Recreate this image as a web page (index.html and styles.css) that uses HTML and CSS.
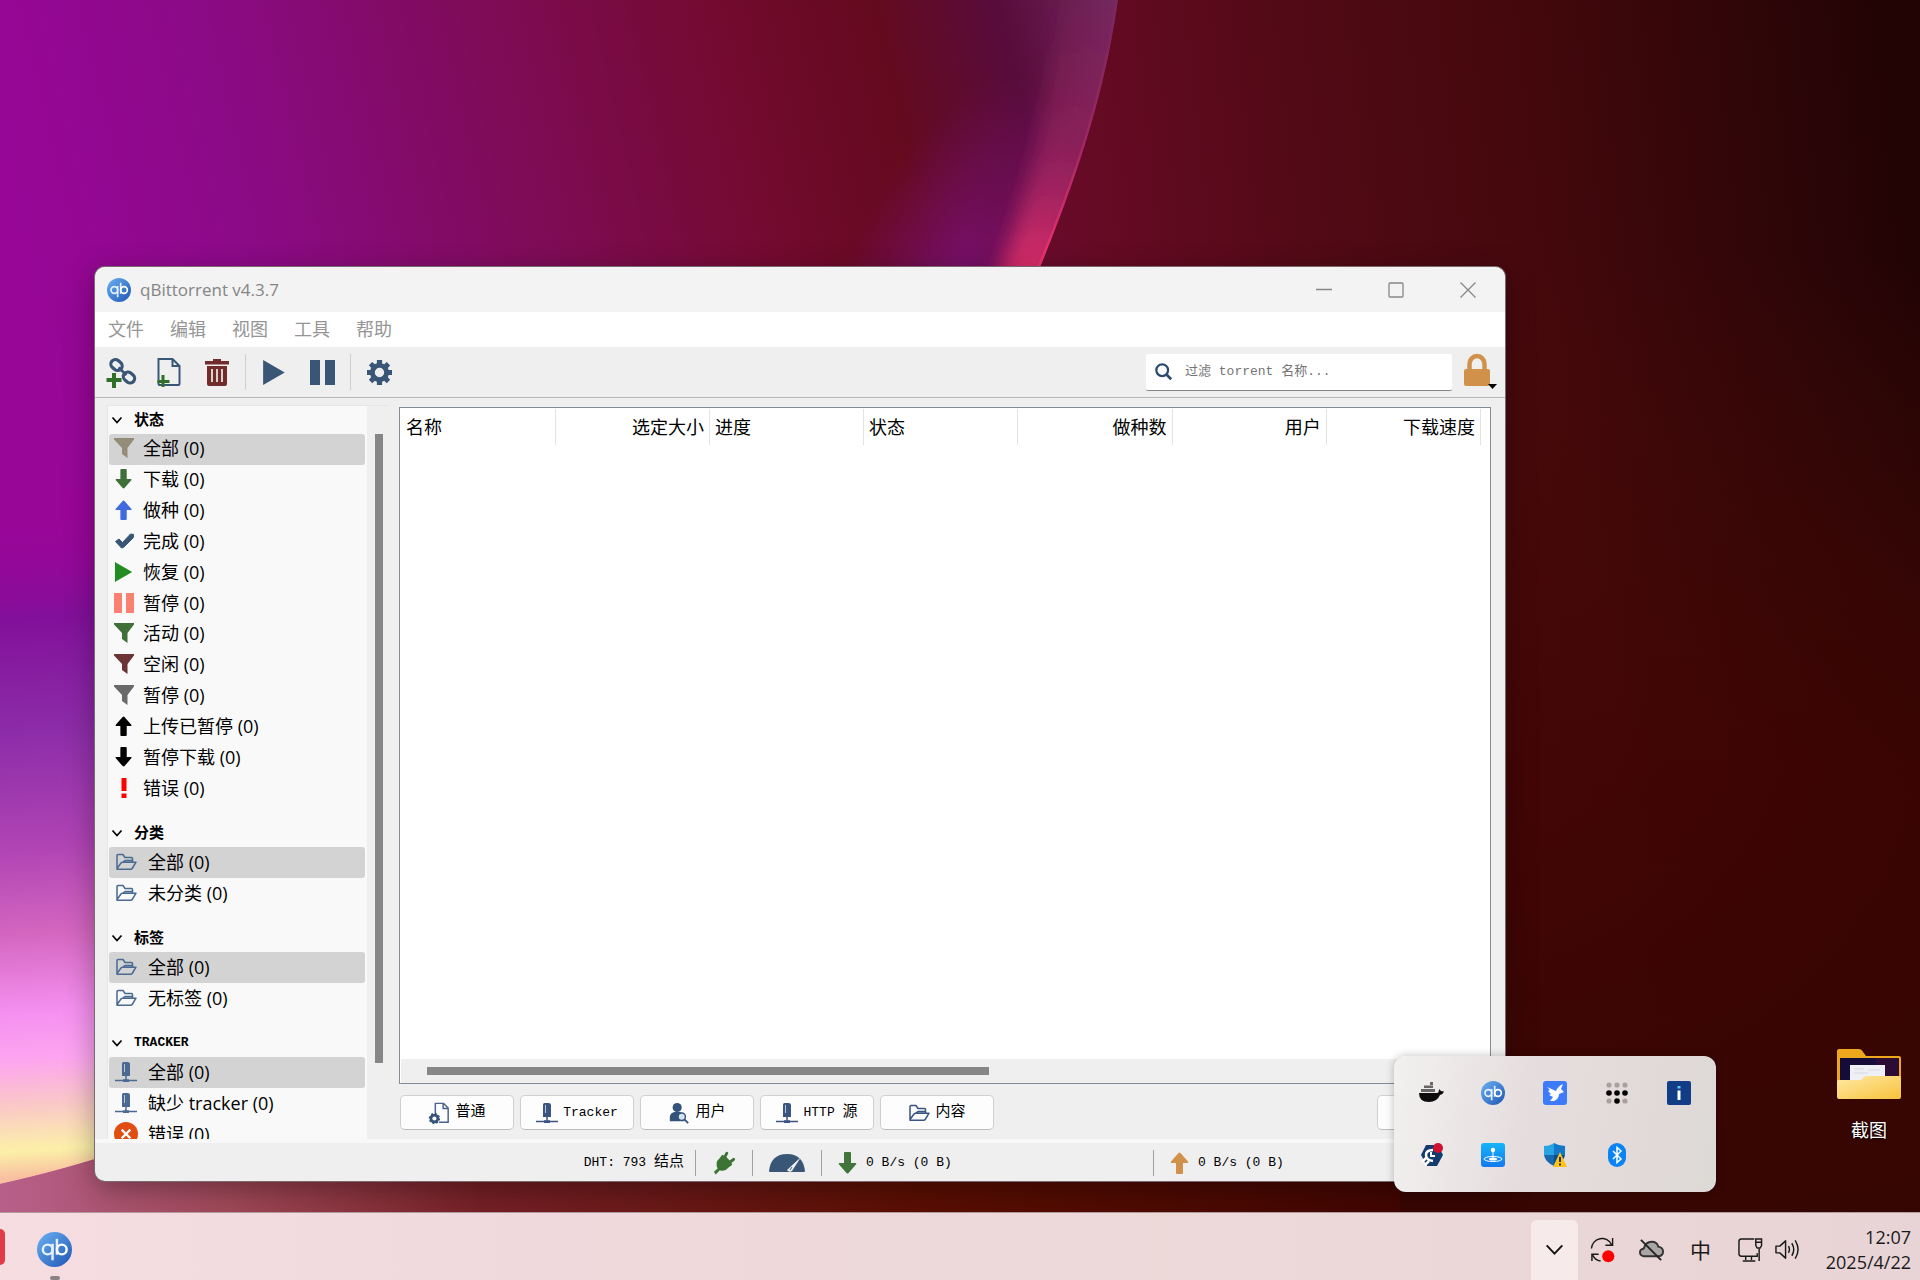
FILE: index.html
```html
<!DOCTYPE html>
<html lang="zh-CN">
<head>
<meta charset="utf-8">
<title>qBittorrent v4.3.7</title>
<link rel="stylesheet" href="styles.css">
</head>
<body>
<svg width="0" height="0" class="defs" aria-hidden="true">
  <defs>
    <linearGradient id="qbg" x1="0" y1="0" x2="1" y2="1"><stop offset="0" stop-color="#6cb2f2"/><stop offset="1" stop-color="#1f55b4"/></linearGradient>
    <linearGradient id="blueTile" x1="0" y1="0" x2="0" y2="1"><stop offset="0" stop-color="#16b4f8"/><stop offset="1" stop-color="#1478f0"/></linearGradient>
    <linearGradient id="folderFront" x1="0" y1="0" x2="1" y2="1"><stop offset="0" stop-color="#ffe9a4"/><stop offset="1" stop-color="#f8c23c"/></linearGradient>
    <symbol id="qb" viewBox="0 0 36 36">
      <circle cx="18" cy="18" r="18" fill="url(#qbg)"/>
      <g fill="none" stroke="#e4f1ff" stroke-width="2.500"><circle cx="11" cy="18" r="5"/><path d="M16 12v17M20.500 7v16.500"/><circle cx="25.500" cy="18" r="5" stroke="#fff"/></g>
    </symbol>
    <symbol id="funnel" viewBox="0 0 20 20"><path d="M0 0h20v1.500l-6.500 8.500V20L8 16V10L0 1.500z" fill="currentColor"/></symbol>
    <symbol id="down" viewBox="0 0 20 22"><path d="M6 1q0-1 1-1h5q1 0 1 1v10h4.500q1.500.3.500 1.500L10.500 21q-1 1-2 0L1 12.500Q0 11.300 1.500 11H6z" fill="currentColor"/></symbol>
    <symbol id="up" viewBox="0 0 20 22"><path d="M6 21q0 1 1 1h5q1 0 1-1V11h4.500q1.500-.3.500-1.500L10.500 1q-1-1-2 0L1 9.500Q0 10.700 1.500 11H6z" fill="currentColor"/></symbol>
    <symbol id="check" viewBox="0 0 20 20"><path d="M1.500 10.500 5 8l3.500 3.500L16.500 3 20 3.500 19 7l-9.500 9.500-2 .5z" fill="currentColor" stroke="currentColor" stroke-linejoin="round"/></symbol>
    <symbol id="play" viewBox="0 0 20 22"><path d="M0 0l19 11L0 22z" fill="currentColor"/></symbol>
    <symbol id="pause" viewBox="0 0 20 20"><path d="M0 0h8v20H0zM12 0h8v20h-8z" fill="currentColor"/></symbol>
    <symbol id="bang" viewBox="0 0 20 20"><path d="M7.500 0h5v13h-5zM7.500 15.500h5V20h-5z" fill="currentColor"/></symbol>
    <symbol id="folder" viewBox="0 0 22 18"><path d="M2 16V2.500q0-1 1-1h5l2 3h6.500q1 0 1 1V9M2 15.500 6 10q.6-.8 1.500-.8H21L17.500 15q-.7 1.200-2 1.200H2zM7 9.500 10 7.500h7" fill="none" stroke="currentColor" stroke-width="1.500" stroke-linejoin="round"/></symbol>
    <symbol id="server" viewBox="0 0 22 20"><path d="M7 1.500Q7 0 8.500 0h4Q15 0 15 1.500V14H7z" fill="currentColor"/><path d="M9.500 2v8" stroke="#b8c6d6"/><path d="M11 14v4M0 18.500h8M14 18.500h8" stroke="currentColor" stroke-width="1.500"/><path d="M8 17.200h6V20H8z" fill="currentColor"/></symbol>
    <symbol id="chev" viewBox="0 0 12 12"><path d="M1.500 3.500 6 8.500l4.500-5" fill="none" stroke="currentColor" stroke-width="1.700"/></symbol>
    <symbol id="gear" viewBox="0 0 24 24"><path fill-rule="evenodd" fill="currentColor" d="M9.500 0h5v3.300l2 .8L19 2l3.200 3.200L20 7.600l.8 1.900H24v5h-3.200l-.8 2 2.200 2.400L19 22.200 16.500 20l-2 .8V24h-5v-3.200l-2-.8L5 22.200 1.800 19 4 16.500l-.8-2H0v-5h3.200l.8-2L1.800 5 5 1.800 7.500 4l2-.8zM12 7.500a4.500 4.500 0 1 0 0 9 4.500 4.500 0 0 0 0-9z"/></symbol>
  </defs>
</svg>

<main class="desktop">
  <svg class="wallpaper" viewBox="0 0 1920 1280" preserveAspectRatio="none" aria-hidden="true">
    <defs>
      <linearGradient id="wRight" gradientUnits="userSpaceOnUse" x1="1000" y1="400" x2="1920" y2="300"><stop offset="0" stop-color="#6c0c34"/><stop offset=".15" stop-color="#640a22"/><stop offset=".35" stop-color="#520a16"/><stop offset=".6" stop-color="#44080c"/><stop offset="1" stop-color="#220405"/></linearGradient>
      <linearGradient id="wLow" x1="0" y1="0" x2="0" y2="1"><stop offset=".2" stop-color="#480a04" stop-opacity="0"/><stop offset=".6" stop-color="#400502" stop-opacity=".75"/><stop offset="1" stop-color="#340603"/></linearGradient>
      <linearGradient id="wBottom" gradientUnits="userSpaceOnUse" x1="0" y1="0" x2="1920" y2="0"><stop offset="0" stop-color="#b8608a"/><stop offset=".12" stop-color="#a04858"/><stop offset=".25" stop-color="#762026"/><stop offset=".48" stop-color="#5a0e02"/><stop offset=".75" stop-color="#400502"/><stop offset="1" stop-color="#300604"/></linearGradient>
      <linearGradient id="wLeft" gradientUnits="userSpaceOnUse" x1="0" y1="200" x2="1100" y2="-60"><stop offset="0" stop-color="#980698"/><stop offset=".2" stop-color="#8c0a88"/><stop offset=".45" stop-color="#7e0c58"/><stop offset=".65" stop-color="#740a30"/><stop offset=".79" stop-color="#640a1e"/><stop offset=".9" stop-color="#580c3c"/><stop offset="1" stop-color="#70265c"/></linearGradient>
      <linearGradient id="wGlow" gradientUnits="userSpaceOnUse" x1="20" y1="520" x2="60" y2="1175"><stop offset="0" stop-color="#960698" stop-opacity="0"/><stop offset=".15" stop-color="#82109a"/><stop offset=".32" stop-color="#8c2ca8"/><stop offset=".5" stop-color="#b044b4"/><stop offset=".63" stop-color="#d466c0"/><stop offset=".75" stop-color="#f590f0"/><stop offset=".82" stop-color="#fda4f0"/><stop offset=".89" stop-color="#fac8c8"/><stop offset=".96" stop-color="#fcf0a8"/><stop offset="1" stop-color="#f8c0a0"/></linearGradient>
      <linearGradient id="fadeUp" x1="0" y1="0" x2="0" y2="1"><stop offset="0" stop-color="#a02c6c" stop-opacity=".1"/><stop offset=".5" stop-color="#b82c6c" stop-opacity=".5"/><stop offset="1" stop-color="#f0326c"/></linearGradient>
      <radialGradient id="violet"><stop offset="0" stop-color="#7c1078" stop-opacity=".9"/><stop offset="1" stop-color="#7c1078" stop-opacity="0"/></radialGradient>
      <filter id="soft" x="-50%" y="-50%" width="200%" height="200%"><feGaussianBlur stdDeviation="10"/></filter>
      <clipPath id="petal"><path d="M0 0H1118C1105 90 1080 170 1040 267C850 800 380 1100 0 1184z"/></clipPath>
    </defs>
    <rect width="1920" height="1280" fill="url(#wRight)"/>
    <rect width="1920" height="1280" fill="url(#wLow)"/>
    <rect y="1060" width="1400" height="220" fill="url(#wBottom)"/>
    <g clip-path="url(#petal)">
      <rect width="1200" height="1200" fill="url(#wLeft)"/>
      <rect y="520" width="500" height="680" fill="url(#wGlow)"/>
      <ellipse cx="955" cy="290" rx="110" ry="220" fill="url(#violet)" transform="rotate(20 955 290)"/>
      <path d="M1130 0C1115 90 1090 170 1045 300L990 300C1030 190 1050 90 1060 0z" fill="url(#fadeUp)" filter="url(#soft)"/>
      <path d="M1118 0C1105 90 1080 170 1040 267" fill="none" stroke="url(#fadeUp)" stroke-width="5"/>
    </g>
  </svg>

  <section class="window" aria-label="qBittorrent">
    <header class="titlebar">
      <svg class="app-icon"><use href="#qb"/></svg>
      <h1>qBittorrent v4.3.7</h1>
      <div class="caption-buttons">
        <button aria-label="最小化"><svg viewBox="0 0 16 16"><path d="M0 7.500h16"/></svg></button>
        <button aria-label="最大化"><svg viewBox="0 0 16 16"><rect x="1" y="1" width="14" height="14" rx="1"/></svg></button>
        <button aria-label="关闭"><svg viewBox="0 0 16 16"><path d="M.5.5l15 15M15.500.5l-15 15"/></svg></button>
      </div>
    </header>
    <nav class="menubar"><button>文件</button><button>编辑</button><button>视图</button><button>工具</button><button>帮助</button></nav>
    <div class="toolbar">
      <button aria-label="添加链接"><svg viewBox="0 0 30 30"><g fill="none" stroke="#3a5676" stroke-width="3.200"><rect x="-6" y="-4.500" width="12" height="9" rx="4.500" transform="translate(10.500 8) rotate(40)"/><rect x="-6" y="-4.500" width="12" height="9" rx="4.500" transform="translate(23 20.500) rotate(40)"/><path d="M12.500 10.500l8 7.500" stroke-width="2.500"/></g><path d="M8 16v15M.5 23h15" stroke="#2f7028" stroke-width="4"/></svg></button>
      <button aria-label="添加文件"><svg viewBox="0 0 30 30"><path d="M4.500 2h14l7 7v18q0 1-1 1h-19q-1 0-1-1zM18.500 2v7h7" fill="none" stroke="#3a5676" stroke-width="2"/><path d="M9 18v12M3.500 24.500h12" stroke="#2f7028" stroke-width="3"/></svg></button>
      <button aria-label="删除"><svg viewBox="0 0 30 30"><path d="M3 4h8V2h8v2h8v3.500H3zM5 9h20v18q0 2-2 2H7q-2 0-2-2z" fill="#722c2c"/><path d="M10 12v13M15 12v13M20 12v13" stroke="#efefef" stroke-width="1.700"/></svg></button>
      <i class="sep"></i>
      <button class="navy" aria-label="开始"><svg class="i24"><use href="#play"/></svg></button>
      <button class="navy" aria-label="暂停"><svg class="i24"><use href="#pause"/></svg></button>
      <i class="sep"></i>
      <button class="navy" aria-label="选项"><svg class="i24"><use href="#gear"/></svg></button>
      <label class="search">
        <svg viewBox="0 0 20 20"><circle cx="8" cy="8" r="6.500" fill="none" stroke="#2c4a6e" stroke-width="2.500"/><path d="M13 13l5 5" stroke="#2c4a6e" stroke-width="3"/></svg>
        <input type="text" placeholder="过滤 torrent 名称..." aria-label="过滤 torrent 名称">
      </label>
      <button class="lock" aria-label="锁定"><svg viewBox="0 0 34 36"><path d="M5.500 17V10a7.500 8 0 0 1 15 0v7" fill="none" stroke="#d0924a" stroke-width="4.500"/><rect y="15" width="26" height="17" rx="2" fill="#d0924a"/><path d="M24 30h9l-4.500 5z"/></svg></button>
    </div>

    <div class="content">
      <aside class="sidebar">
        <div class="filters">
          <section>
            <h2><button><svg><use href="#chev"/></svg>状态</button></h2>
            <ul class="status-list">
              <li class="on"><svg style="color:#928c78"><use href="#funnel"/></svg>全部 (0)</li>
              <li><svg style="color:#40703a"><use href="#down"/></svg>下载 (0)</li>
              <li><svg style="color:#4169e1"><use href="#up"/></svg>做种 (0)</li>
              <li><svg style="color:#3a5676"><use href="#check"/></svg>完成 (0)</li>
              <li><svg style="color:#228b22"><use href="#play"/></svg>恢复 (0)</li>
              <li><svg style="color:#fa8072"><use href="#pause"/></svg>暂停 (0)</li>
              <li><svg style="color:#40703a"><use href="#funnel"/></svg>活动 (0)</li>
              <li><svg style="color:#6c3434"><use href="#funnel"/></svg>空闲 (0)</li>
              <li><svg style="color:#6a6a6a"><use href="#funnel"/></svg>暂停 (0)</li>
              <li><svg style="color:#000"><use href="#up"/></svg>上传已暂停 (0)</li>
              <li><svg style="color:#000"><use href="#down"/></svg>暂停下载 (0)</li>
              <li><svg style="color:#f00"><use href="#bang"/></svg>错误 (0)</li>
            </ul>
          </section>
          <section>
            <h2><button><svg><use href="#chev"/></svg>分类</button></h2>
            <ul>
              <li class="on"><svg><use href="#folder"/></svg>全部 (0)</li>
              <li><svg><use href="#folder"/></svg>未分类 (0)</li>
            </ul>
          </section>
          <section>
            <h2><button><svg><use href="#chev"/></svg>标签</button></h2>
            <ul>
              <li class="on"><svg><use href="#folder"/></svg>全部 (0)</li>
              <li><svg><use href="#folder"/></svg>无标签 (0)</li>
            </ul>
          </section>
          <section>
            <h2><button class="latin"><svg><use href="#chev"/></svg>TRACKER</button></h2>
            <ul>
              <li class="on"><svg><use href="#server"/></svg>全部 (0)</li>
              <li><svg><use href="#server"/></svg>缺少 tracker (0)</li>
              <li><svg class="error" viewBox="0 0 22 22"><circle cx="11" cy="11" r="11" fill="#e24e12"/><path d="M7 7l8 8M15 7l-8 8" stroke="#fff" stroke-width="2"/></svg>错误 (0)</li>
            </ul>
          </section>
        </div>
        <div class="vscroll"><i></i></div>
      </aside>

      <div class="main">
        <div class="transfers">
          <table>
            <thead><tr><th>名称</th><th class="num">选定大小</th><th>进度</th><th>状态</th><th class="num">做种数</th><th class="num">用户</th><th class="num">下载速度</th></tr></thead>
          </table>
          <div class="hscroll"><i></i></div>
        </div>
        <div class="tabs">
          <button><svg viewBox="0 0 22 24"><path d="M7 12V1.500h9l5 5V22H11M15.500 1.500V7H21" fill="none" stroke="#4a648a" stroke-width="1.600"/><circle cx="6" cy="18" r="3.800" fill="none" stroke="#34527a" stroke-width="3"/><circle cx="6" cy="18" r="5.500" fill="none" stroke="#34527a" stroke-width="1.500" stroke-dasharray="2 2.300"/></svg><span class="cjk">普通</span></button>
          <button><svg><use href="#server"/></svg>Tracker</button>
          <button><svg viewBox="0 0 22 24"><circle cx="9" cy="6" r="5" fill="#34527a"/><path d="M1 21v-4q0-5 5-6h6q4 1 5 4v6z" fill="#34527a"/><circle cx="14" cy="16" r="4" fill="#d8e2ee" stroke="#34527a" stroke-width="1.500"/><path d="M17 19l4 4" stroke="#34527a" stroke-width="2"/></svg><span class="cjk">用户</span></button>
          <button><svg><use href="#server"/></svg><span>HTTP <span class="cjk">源</span></span></button>
          <button><svg><use href="#folder"/></svg><span class="cjk">内容</span></button>
          <button class="last" aria-label="速度"></button>
        </div>
      </div>
    </div>

    <footer class="statusbar">
      <span class="dht">DHT: 793 <span class="cjk">结点</span></span>
      <span class="plug"><svg viewBox="0 0 24 24"><path d="M1 21.500 5 18Q2 11 7 7l3-4 4 2 5 5 2 4-4 3Q13 22 7.500 20L3 24.500z" fill="#3c7434"/><path d="M12 7 15 1.500M17.500 12l5-4" stroke="#3c7434" stroke-width="3.200" stroke-linecap="round"/></svg></span>
      <span class="gauge"><svg viewBox="0 0 36 20"><path d="M0 18Q2 1 18 1t18 17q0 1-1 1H1q-1 0-1-1z" fill="#3a5676"/><path d="M32 4 23 18q-3 2-5-1z" fill="#f2f2f2"/><path d="M23 14l-2 3" stroke="#3a5676"/></svg></span>
      <span class="rate"><svg style="color:#40743a"><use href="#down"/></svg>0 B/s (0 B)</span>
      <span class="rate"><svg style="color:#d0924a"><use href="#up"/></svg>0 B/s (0 B)</span>
    </footer>
  </section>

  <a class="shortcut" href="#shots">
    <svg viewBox="0 0 66 52"><path d="M1 3q0-2 2-2h20q2 0 3 1.500L30 8h33q2 0 2 2v30H1z" fill="#eda81c"/><path d="M4 10h59v25H4z" fill="#160c3c"/><path d="M40 10h23v22H40z" fill="#2c0c34"/><path d="M14 17h35v16H14z" fill="#eef0f6"/><path d="M18 21h10M18 25h14M32 22h12" stroke="#d4d8e0"/><path d="M1 33q0-1 2-1h22l4-4h34q2 0 2 2v19q0 2-2 2H3q-2 0-2-2z" fill="url(#folderFront)"/></svg>
    <span>截图</span>
  </a>

  <div class="tray-flyout">
    <button aria-label="Docker"><svg viewBox="0 0 24 24"><path d="M0 12h18q2 0 2-4l2 2 3 .5q-1 3-4 3.500-3 7-11 7Q0 21 0 12z" fill="#0c0c0c"/><path d="M2 8h14v3H2zM5 4.500h9V7H5zM11 1h3v3h-3z" fill="#666"/></svg></button>
    <button aria-label="qBittorrent"><svg><use href="#qb"/></svg></button>
    <button aria-label="迅雷"><svg viewBox="0 0 24 24"><rect width="24" height="24" rx="3" fill="#3c7cfc"/><path d="M4 6l9 4q2-5 7-7l-2 5 3 3-5 2q0 5-5 7H7l3-4-4-2 2-1-3-3 2-1z" fill="#fff"/></svg></button>
    <button aria-label="网格"><svg viewBox="0 0 24 24"><g fill="#aaa0a0"><circle cx="4" cy="4" r="2.600"/><circle cx="12" cy="4" r="2.600"/><circle cx="20" cy="4" r="2.600"/><circle cx="4" cy="20" r="2.600"/><circle cx="20" cy="20" r="2.600"/></g><circle cx="4" cy="12" r="2.800"/><circle cx="12" cy="12" r="2.800"/><circle cx="20" cy="12" r="2.800"/><circle cx="12" cy="20" r="2.800"/></svg></button>
    <button aria-label="信息"><svg viewBox="0 0 24 24"><rect width="24" height="24" rx="2" fill="#123c86"/><path d="M10.500 9.500h3V19h-3z" fill="#fff"/><path d="M10.500 5h3v2.500h-3z" fill="#5cc8f0"/></svg></button>
    <button aria-label="远程工具"><svg viewBox="0 0 24 24"><path d="M7 2h12l5 10-6 11H8L2 12z" fill="#123c6c"/><path d="M14 7q-7 0-7 5t7 6M3 19l5-5M6 22l4-4" fill="none" stroke="#fff" stroke-width="2.500"/><path d="M12 9v4h4" fill="none" stroke="#fff" stroke-width="2"/><circle cx="19" cy="5" r="5" fill="#d01030"/></svg></button>
    <button aria-label="同步"><svg viewBox="0 0 24 24"><rect width="24" height="24" rx="3" fill="url(#blueTile)"/><circle cx="12" cy="7" r="2.200" fill="#fff"/><path d="M12 9v6" stroke="#fff"/><ellipse cx="12" cy="16" rx="9" ry="2.500" fill="none" stroke="#fff"/><ellipse cx="12" cy="16" rx="4" ry="1.500" fill="#fff"/></svg></button>
    <button aria-label="安全中心"><svg viewBox="0 0 24 24"><path d="M1 3q6 0 10-3v12H1z" fill="#28a4e4"/><path d="M11 0q5 3 11 3v9H11z" fill="#1478c8"/><path d="M1 12h10v11Q2 19 1 12z" fill="#1668b0"/><path d="M11 12h11q-1 7-11 11z" fill="#0e4c90"/><path d="M17 9l7 15H10z" fill="#fcc418"/><path d="M17 14v5M17 20.500v2" stroke="#222" stroke-width="1.800"/></svg></button>
    <button aria-label="蓝牙"><svg viewBox="0 0 24 24"><rect x="3" width="18" height="24" rx="9" fill="#0a84f4"/><path d="M8 8l8 8-4 3.500v-15L16 8l-8 8" fill="none" stroke="#fff" stroke-width="1.500"/></svg></button>
  </div>
</main>

<footer class="taskbar">
  <div class="pinned">
    <button class="edge-app" aria-label="应用"></button>
    <button class="running" aria-label="qBittorrent"><svg><use href="#qb"/></svg></button>
  </div>
  <div class="tray">
    <button class="expand" aria-label="显示隐藏的图标"><svg viewBox="0 0 24 24"><path d="M4.500 8l7.500 8 7.500-8" fill="none" stroke="#111" stroke-width="1.800"/></svg></button>
    <button aria-label="更新"><svg viewBox="0 0 26 26"><path d="M1.500 12a11 11 0 0 1 21-4M23.500 1v7.500H16M2 25v-7h7M3 19q2 5 8 6" fill="none" stroke="#1a1a1a" stroke-width="1.500"/><circle cx="19" cy="20" r="6.300" fill="#f00"/></svg></button>
    <button aria-label="OneDrive"><svg viewBox="0 0 26 26"><path d="M5 20q-4-1-4-4t4-4Q7 5 13 5t7 5q5 1 5 5t-4 5z" fill="#aaa6a6" stroke="#333" stroke-width="2"/><path d="M2 3l21 21" stroke="#222" stroke-width="2"/></svg></button>
    <button class="ime">中</button>
    <button class="net" aria-label="网络和音量"><svg viewBox="0 0 26 26"><path d="M17 2H3.500Q1 2 1 4.500v13Q1 20 3.500 20H20v-3M8 20v4M14 20v4M5 25h13M22 12v13" fill="none" stroke="#1a1a1a" stroke-width="1.500"/><path d="M18.500 2h6v7l-1.500 2.500h-3L18.500 9zM19 5.500h5" fill="none" stroke="#1a1a1a" stroke-width="1.500"/></svg><svg viewBox="0 0 26 26"><path d="M1 9.500h4l6-5.500v18l-6-5.500H1zM14 9.500q2 3.500 0 7M17.500 6.500q4 6.500 0 13M21 3.500q6 9.500 0 19" fill="none" stroke="#1a1a1a" stroke-width="1.500" stroke-linejoin="round"/></svg></button>
    <button class="clock"><time>12:07</time><time>2025/4/22</time></button>
  </div>
</footer>
</body>
</html>
```
FILE: styles.css
```css
* { box-sizing: border-box; }
body {
  margin: 0;
  height: 100vh;
  display: flex;
  flex-direction: column;
  overflow: hidden;
  font: 18px/24px "Open Sans", "Noto Sans CJK SC", sans-serif;
  color: #000;
}
button { font: inherit; color: inherit; border: 0; background: none; padding: 0; display: flex; align-items: center; justify-content: center; }
svg { display: block; flex: none; overflow: visible; }
h1, h2, ul { margin: 0; padding: 0; font-size: inherit; font-weight: 400; list-style: none; }
.defs { position: absolute; }

.desktop { position: relative; flex: 1; min-height: 0; background: #3a0604; }
.wallpaper { position: absolute; left: 0; top: 0; width: 100vw; height: 100vh; }

.window {
  position: absolute;
  left: 95px;
  top: 267px;
  right: 415px;
  bottom: 31px;
  display: flex;
  flex-direction: column;
  background: #efefef;
  border-radius: 10px;
  overflow: hidden;
  box-shadow: 0 0 0 1px #7a6a70, 0 8px 30px rgba(0, 0, 0, .35);
}
.titlebar { display: flex; align-items: center; height: 45px; padding-left: 12px; background: #f3f3f3; color: #858585; }
.titlebar h1 { font-size: 17px; }
.app-icon { width: 24px; height: 24px; margin-right: 9px; }
.caption-buttons { display: flex; margin: 0 1px 0 auto; align-self: stretch; }
.caption-buttons button { width: 72px; }
.caption-buttons svg { width: 16px; height: 16px; fill: none; stroke: #868686; stroke-width: 1.300; }
.menubar { display: flex; height: 35px; padding: 0 0 2px; background: #fff; color: #959595; }
.menubar button { padding: 0 13px; }

.toolbar { display: flex; align-items: center; height: 51px; padding: 0 3px 0 2px; border-bottom: 1px solid #b4b6b8; }
.toolbar button { width: 48px; height: 48px; }
.toolbar svg { width: 30px; height: 30px; }
.toolbar .i24 { width: 25px; height: 25px; }
.navy { color: #3a5676; }
.sep { width: 1px; height: 36px; margin: 0 4px; background: #cfcfcf; }
.search { display: flex; align-items: center; width: 306px; height: 37px; margin: 0 8px 0 auto; padding-left: 9px; background: #fff; border-bottom: 1px solid #868686; border-radius: 2px; }
.toolbar .search svg { width: 18px; height: 18px; }
.search input { flex: 1; min-width: 0; margin-left: 12px; padding: 0; border: 0; outline: 0; background: none; font: 13px/20px "Liberation Mono", "Noto Sans CJK SC", monospace; }
.search input::placeholder { color: #757575; opacity: 1; }
.toolbar .lock { width: 42px; }
.toolbar .lock svg { width: 34px; height: 36px; }

.content { flex: 1; min-height: 0; display: flex; padding: 7px 14px 0 12px; border-bottom: 4px solid #f8f8f8; }
.sidebar { display: flex; width: 282px; flex: none; border: 1px solid #e6e6e6; border-width: 1px 0 0 1px; }
.filters { flex: 1; min-width: 0; overflow: hidden; background: #f9f9f9; padding: 0 2px 0 1px; }
.filters section { margin-bottom: 15px; }
.filters h2 button { height: 28px; padding-left: 2px; font: bold 15px/28px "Liberation Sans", "Noto Sans CJK SC", sans-serif; }
.filters h2 .latin { font: bold 13px/28px "Liberation Mono", monospace; }
.filters h2 svg { width: 12px; height: 12px; margin-right: 11px; }
.filters li { display: flex; align-items: center; height: 31px; padding: 0 0 2px 6px; border-radius: 3px; white-space: nowrap; }
.filters li svg { width: 22px; height: 20px; margin-right: 11px; color: #4a6a92; }
.filters .status-list { display: grid; grid-auto-rows: 1fr; height: 370px; }
.filters .status-list li { height: auto; padding-left: 5px; }
.filters .status-list svg { width: 20px; margin-right: 9px; }
.filters li .error { width: 24px; height: 24px; margin: 0 10px 0 -1px; }
.filters .on { background: #d3d3d3; }
.vscroll { display: flex; justify-content: center; width: 20px; padding: 28px 0 76px; margin-right: 2px; }
.vscroll i { width: 8px; margin-left: 3px; background: #868686; }

.main { flex: 1; min-width: 0; display: flex; flex-direction: column; margin-left: 10px; }
.transfers { flex: 1; min-height: 0; display: flex; flex-direction: column; background: #fff; border: 1px solid #868c94; margin-top: 2px; padding: 1px 2px 0 1px; }
table { width: 1080px; table-layout: fixed; border-collapse: collapse; }
th { height: 36px; padding: 0 5px 0 5px; font-weight: 400; text-align: left; border-right: 1px solid #e4e4e4; }
.num { text-align: right; }
.hscroll { display: flex; align-items: center; height: 24px; margin-top: auto; padding-left: 26px; background: #efefef; }
.hscroll i { width: 53%; height: 8px; background: #868686; }
.tabs { display: flex; gap: 6px; padding: 11px 0 9px 1px; font: 13px/18px "Liberation Mono", "Noto Sans CJK SC", monospace; }
.tabs button { width: 114px; height: 35px; gap: 5px; background: #fdfdfd; border: 1px solid #d0d0d0; border-bottom-color: #bcbcbc; border-radius: 5px; }
.tabs svg { width: 22px; height: 22px; color: #3a5680; }
.tabs .last { margin-left: auto; }
.cjk { font-size: 15px; }

.statusbar { display: flex; justify-content: flex-end; align-items: center; height: 38px; padding: 2px 20px 0 0; font: 13px/26px "Liberation Mono", "Noto Sans CJK SC", monospace; white-space: pre; }
.statusbar > span { display: flex; align-items: center; height: 26px; }
.statusbar > span + span { border-left: 1px solid #a0a0a0; }
.statusbar .dht { padding-right: 11px; }
.plug { width: 57px; justify-content: center; }
.plug svg { width: 22px; height: 22px; }
.gauge { width: 69px; justify-content: center; }
.gauge svg { width: 36px; height: 20px; }
.rate { width: 332px; padding-left: 16px; }
.rate svg { width: 20px; height: 22px; margin-right: 8px; }

.shortcut { position: absolute; right: 17px; bottom: 70px; width: 68px; display: flex; flex-direction: column; align-items: center; gap: 18px; color: #fff; text-decoration: none; text-shadow: 1px 1px 2px #000; }
.shortcut svg { width: 66px; height: 52px; }

.tray-flyout {
  position: absolute;
  right: 204px;
  bottom: 20px;
  display: grid;
  grid-template-columns: repeat(5, 62px);
  grid-auto-rows: 62px;
  padding: 6px;
  background: linear-gradient(100deg, #f2f1f0, #e6dede 40%, #e2d9d9 75%, #dcdad6);
  border-radius: 12px;
  box-shadow: 0 0 8px rgba(0, 0, 0, .25);
}
.tray-flyout svg { width: 24px; height: 24px; }

.taskbar { position: relative; display: flex; justify-content: space-between; height: 68px; border-top: 1px solid #b09a9a; background: linear-gradient(90deg, #f5dde2, #f0d9dc 30%, #ecd9d8 60%, #e8d4d6); }
.pinned { display: flex; align-items: center; gap: 32px; }
.edge-app { width: 5px; height: 36px; background: #e23a48; border-radius: 0 5px 5px 0; }
.running { position: relative; height: 67px; }
.running svg { width: 35px; height: 35px; margin-top: 5px; }
.running::after { content: ""; position: absolute; bottom: 0; left: 13px; width: 10px; height: 4px; border-radius: 3px; background: #8a8284; }
.tray { display: flex; align-items: center; padding: 6px 9px 0 0; color: #1a1a1a; }
.tray button { width: 49px; height: 60px; }
.tray svg { width: 25px; height: 25px; }
.tray .expand { width: 47px; background: #f6ebea; border-radius: 6px 6px 0 0; }
.tray .ime { font-size: 21px; }
.tray .net { width: 88px; gap: 12px; }
.tray .clock { width: 98px; flex-direction: column; align-items: flex-end; line-height: 25px; }
```
